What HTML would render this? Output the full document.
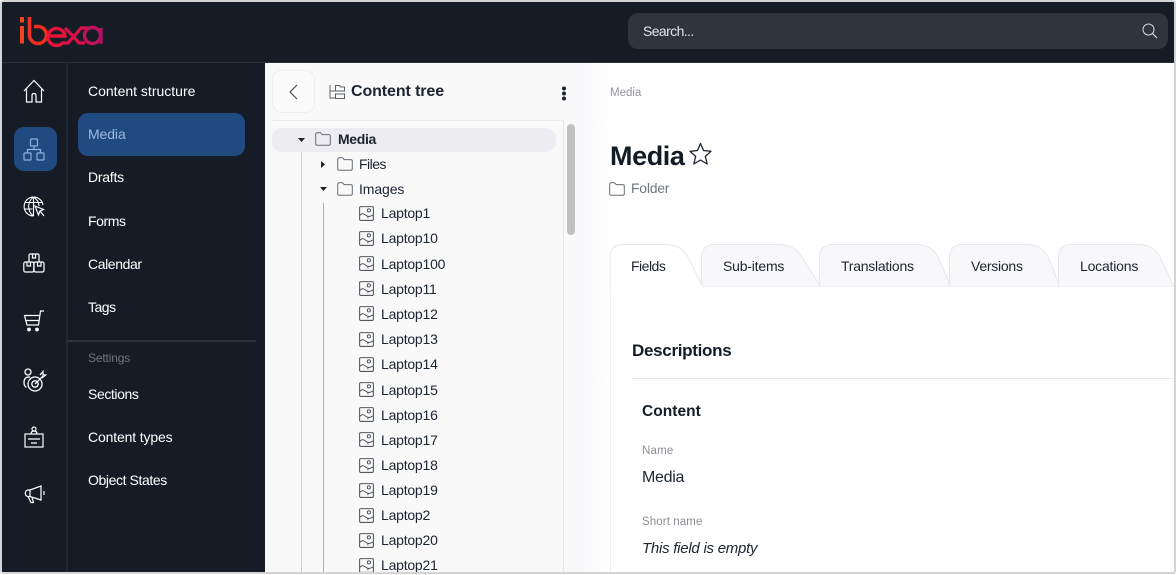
<!DOCTYPE html>
<html><head><meta charset="utf-8"><style>
*{box-sizing:border-box}
html,body{margin:0;padding:0}
body{width:1176px;height:574px;position:relative;overflow:hidden;background:#fff;font-family:"Liberation Sans",sans-serif}
.a{position:absolute;white-space:nowrap;line-height:20px}
.m{left:88px;color:#fff;font-size:14px}
.r{color:#1c2430;font-size:14px;letter-spacing:-.22px}
svg{position:absolute;overflow:visible;fill:none}
.tl{color:#1c2430;font-size:14px}
</style></head><body>
<svg width="0" height="0" style="position:absolute"><defs>
<symbol id="f" viewBox="0 0 16 14"><path d="M.7 2.2Q.7.7 2.2.7H5.6L7.2 2.6H13.8Q15.3 2.6 15.3 4.1V11.8Q15.3 13.3 13.8 13.3H2.2Q.7 13.3 .7 11.8Z" fill="none" stroke="#666c75" stroke-width="1"/></symbol>
<symbol id="i" viewBox="0 0 16 16"><rect x=".7" y=".7" width="14.6" height="14.6" rx="1" fill="none" stroke="#3a414b" stroke-width="1"/><circle cx="10.5" cy="4.7" r="1.7" fill="none" stroke="#3a414b" stroke-width=".9"/><path d="M1 10Q3.5 7 6 9T10 11Q12 11.500 15 9.500M9.500 11V13" fill="none" stroke="#3a414b" stroke-width=".9"/></symbol>
</defs></svg>

<!-- top bar -->
<div class="a" style="left:2px;top:2px;width:1172px;height:60px;background:#151c26"></div>
<div class="a" style="left:2px;top:62px;width:263px;height:510px;background:#151c26"></div>
<div class="a" style="left:2px;top:62px;width:1172px;height:1px;background:#2a313b"></div>
<div class="a" style="left:66px;top:62px;width:2px;height:510px;background:#1f2630"></div>
<svg style="left:18px;top:15px" width="86" height="30" viewBox="0 0 86 30">
<path d="M4 11V28.500M4 2V7.500" stroke="#f4411e" stroke-width="4"/>
<path d="M11.500 2V20A8.500 8.500 0 1 0 20 11.500H16" stroke="#f03020" stroke-width="3.600"/>
<path d="M32 21H47A8.500 8.500 0 1 0 45 27.500" stroke="#e8143a" stroke-width="3.400"/>
<path d="M47 13L55 21L61 28H67M44 28H50L58 19L63 13H70" stroke="#dc1048" stroke-width="3.200"/>
<circle cx="74.500" cy="20.500" r="8" stroke="#c0115a" stroke-width="3.400"/>
<path d="M83 13V29" stroke="#ae1164" stroke-width="3.400"/>
</svg>
<div class="a" style="left:628px;top:13px;width:540px;height:36px;background:#2e353f;border-radius:10px"></div>
<div class="a" style="left:643px;top:21px;color:#e3e5e8;font-size:14px;letter-spacing:-.6px">Search...</div>
<svg style="left:1142px;top:23px" width="16" height="16" viewBox="0 0 16 16"><circle cx="6.500" cy="6.500" r="5.500" stroke="#d5d8dc" stroke-width="1"/><path d="M10.500 10.500L15 15" stroke="#d5d8dc" stroke-width="1.200"/></svg>

<!-- rail -->
<div class="a" style="left:14px;top:127px;width:43px;height:44px;background:#214a80;border-radius:10px"></div>
<svg style="left:23px;top:79px" width="22" height="24" viewBox="0 0 22 24" stroke="#fff" stroke-width="1.200"><path d="M1 12L11 1.500L21 12M3.500 10V23H9V16.500Q9 14.500 11 14.500T13 16.500V23H18.500V10"/></svg>
<svg style="left:23px;top:138px" width="22" height="23" viewBox="0 0 22 23" stroke="#8fb1dd" stroke-width="1.200"><rect x="7.500" y="1" width="7" height="7" rx=".8"/><rect x="1" y="15" width="7" height="7" rx=".8"/><rect x="14" y="15" width="7" height="7" rx=".8"/><path d="M11 8V11.500M4.500 15V11.500H17.500V15"/></svg>
<svg style="left:23px;top:196px" width="22" height="22" viewBox="0 0 22 22" stroke="#fff" stroke-width="1.100"><path d="M20 9A9.500 9.500 0 1 0 10.500 20M10.500 .8V20M10.500 1C4 6 4 15 10.500 20M10.500 1C15 4 16 7 16 10M1.800 6.500H19M1 13H9.500"/><path d="M12 10L20.500 13.500L17 15L15.500 19ZM17 15L21 20" stroke-width="1.200"/></svg>
<svg style="left:23px;top:253px" width="22" height="20" viewBox="0 0 22 20" stroke="#fff" stroke-width="1.200"><path d="M6 9V2.500Q6 1 7.500 1H14.500Q16 1 16 2.500V9M9.500 1V5H12.500V1"/><rect x=".8" y="9" width="10" height="10" rx="1.500"/><rect x="11" y="9" width="10" height="10" rx="1.500"/><path d="M4 9V13H7.500V9M14.500 9V13H18V9"/></svg>
<svg style="left:23px;top:310px" width="22" height="22" viewBox="0 0 22 22" stroke="#fff" stroke-width="1.200"><path d="M21 1H17.500L15.500 15H4L1.500 5.500H16.500M3 10.500H16"/><circle cx="6" cy="19.500" r="1.300" fill="#fff"/><circle cx="14" cy="19.500" r="1.300" fill="#fff"/></svg>
<svg style="left:23px;top:368px" width="22" height="24" viewBox="0 0 22 24" stroke="#fff" stroke-width="1.300"><circle cx="5" cy="4" r="3"/><path d="M7 9Q1 8.500 1 14.500Q1 18 3.500 19.500"/><circle cx="12" cy="16" r="7"/><circle cx="12" cy="16" r="3.200"/><path d="M12 16L20 8M17 7L20 3.500V7H22.500L19 10"/></svg>
<svg style="left:24px;top:426px" width="20" height="23" viewBox="0 0 20 23" stroke="#fff" stroke-width="1.200"><rect x="1" y="8" width="18" height="13"/><circle cx="10" cy="3" r="2"/><path d="M7 8Q7 5 10 5T13 8M4 13H16M7 17H13"/></svg>
<svg style="left:23px;top:485px" width="22" height="18" viewBox="0 0 22 18" stroke="#fff" stroke-width="1.200"><path d="M18 1V15L7 11.500H4.500A3.500 3.500 0 0 1 4.500 5H7ZM7 5V11.500M5 11.500L8 17.500H10.500L9 12.500"/><path d="M21 6V10"/></svg>

<!-- menu -->
<div class="a" style="left:78px;top:113px;width:167px;height:43px;background:#214a80;border-radius:10px"></div>
<div class="a m" style="top:81px">Content structure</div>
<div class="a m" style="top:124px;color:#9bb9e2;letter-spacing:-.1px">Media</div>
<div class="a m" style="top:167px;letter-spacing:-.25px">Drafts</div>
<div class="a m" style="top:211px;letter-spacing:-.4px">Forms</div>
<div class="a m" style="top:254px;letter-spacing:-.4px">Calendar</div>
<div class="a m" style="top:297px;letter-spacing:-.5px">Tags</div>
<div class="a" style="left:67px;top:340px;width:189px;height:2px;background:#2a313b"></div>
<div class="a" style="left:88px;top:348px;color:#6f757d;font-size:12px;letter-spacing:-.15px">Settings</div>
<div class="a m" style="top:384px;letter-spacing:-.4px">Sections</div>
<div class="a m" style="top:427px;letter-spacing:-.15px">Content types</div>
<div class="a m" style="top:470px;letter-spacing:-.4px">Object States</div>

<!-- tree panel -->
<div class="a" style="left:265px;top:63px;width:315px;height:509px;background:#f9f9fa"></div>
<div class="a" style="left:272px;top:70px;width:43px;height:43px;background:#fbfbfc;border:1px solid #eeeef2;border-radius:10px"></div>
<svg style="left:288px;top:84px" width="11" height="16" viewBox="0 0 11 16" stroke="#3a414b" stroke-width="1.100"><path d="M9 1L2 8L9 15"/></svg>
<svg style="left:329px;top:84px" width="16" height="16" viewBox="0 0 16 16" stroke="#5a616b" stroke-width="1"><path d="M1 1V14H6M1 7H6"/><path d="M6.500 1.500H10.500L11.500 3H15.500V7H6.500ZM6.500 10H15.500V14.500H6.500Z"/></svg>
<div class="a" style="left:351px;top:82px;font-size:16px;font-weight:700;color:#1c2430;letter-spacing:-.1px">Content tree</div>
<svg style="left:561px;top:86px;fill:#1c2430" width="6" height="15" viewBox="0 0 6 15"><circle cx="3" cy="2.500" r="2"/><circle cx="3" cy="7.500" r="2"/><circle cx="3" cy="12.500" r="2"/></svg>
<div class="a" style="left:272px;top:120px;width:292px;height:1px;background:#ececf0"></div>
<div class="a" style="left:563px;top:121px;width:1px;height:451px;background:#e7e7ea"></div>
<div class="a" style="left:567px;top:124px;width:8px;height:111px;background:#c1c1c3;border-radius:4px"></div>
<div class="a" style="left:272px;top:128px;width:284px;height:24px;background:#ededf1;border-radius:10px"></div>
<div class="a" style="left:301px;top:152px;width:1px;height:420px;background:#cfcfd3"></div>
<div class="a" style="left:323px;top:203px;width:1px;height:369px;background:#b0b0b4"></div>
<svg style="left:298px;top:138px;fill:#222" width="7" height="4"><path d="M0 0H7L3.500 4Z"/></svg>
<svg style="left:321px;top:161px;fill:#222" width="4" height="7"><path d="M0 0V7L4 3.500Z"/></svg>
<svg style="left:320px;top:187px;fill:#222" width="7" height="4"><path d="M0 0H7L3.500 4Z"/></svg>
<svg style="left:315px;top:132px" width="16" height="14"><use href="#f"/></svg>
<svg style="left:337px;top:157px" width="16" height="14"><use href="#f"/></svg>
<svg style="left:337px;top:182px" width="16" height="14"><use href="#f"/></svg>
<div class="a r" style="left:338px;top:129px;font-weight:700;letter-spacing:-.35px">Media</div>
<div class="a r" style="left:359px;top:154px;letter-spacing:-.5px">Files</div>
<div class="a r" style="left:359px;top:179px;letter-spacing:-.1px">Images</div>

<svg style="left:359px;top:206px" width="15" height="15"><use href="#i"/></svg><div class="a r" style="left:381px;top:203px">Laptop1</div>
<svg style="left:359px;top:231px" width="15" height="15"><use href="#i"/></svg><div class="a r" style="left:381px;top:228px">Laptop10</div>
<svg style="left:359px;top:256px" width="15" height="15"><use href="#i"/></svg><div class="a r" style="left:381px;top:254px">Laptop100</div>
<svg style="left:359px;top:281px" width="15" height="15"><use href="#i"/></svg><div class="a r" style="left:381px;top:279px">Laptop11</div>
<svg style="left:359px;top:306px" width="15" height="15"><use href="#i"/></svg><div class="a r" style="left:381px;top:304px">Laptop12</div>
<svg style="left:359px;top:332px" width="15" height="15"><use href="#i"/></svg><div class="a r" style="left:381px;top:329px">Laptop13</div>
<svg style="left:359px;top:357px" width="15" height="15"><use href="#i"/></svg><div class="a r" style="left:381px;top:354px">Laptop14</div>
<svg style="left:359px;top:382px" width="15" height="15"><use href="#i"/></svg><div class="a r" style="left:381px;top:380px">Laptop15</div>
<svg style="left:359px;top:407px" width="15" height="15"><use href="#i"/></svg><div class="a r" style="left:381px;top:405px">Laptop16</div>
<svg style="left:359px;top:432px" width="15" height="15"><use href="#i"/></svg><div class="a r" style="left:381px;top:430px">Laptop17</div>
<svg style="left:359px;top:458px" width="15" height="15"><use href="#i"/></svg><div class="a r" style="left:381px;top:455px">Laptop18</div>
<svg style="left:359px;top:483px" width="15" height="15"><use href="#i"/></svg><div class="a r" style="left:381px;top:480px">Laptop19</div>
<svg style="left:359px;top:508px" width="15" height="15"><use href="#i"/></svg><div class="a r" style="left:381px;top:505px">Laptop2</div>
<svg style="left:359px;top:533px" width="15" height="15"><use href="#i"/></svg><div class="a r" style="left:381px;top:530px">Laptop20</div>
<svg style="left:359px;top:558px" width="15" height="15"><use href="#i"/></svg><div class="a r" style="left:381px;top:555px">Laptop21</div>

<!-- main -->
<div class="a" style="left:580px;top:63px;width:30px;height:509px;background:linear-gradient(90deg,#f8f9fd,#fff)"></div>
<div class="a" style="left:610px;top:82.500px;color:#93979d;font-size:11.500px">Media</div>
<div class="a" style="left:610px;top:141px;line-height:30px;font-size:27px;font-weight:700;color:#131c26;letter-spacing:-.4px">Media</div>
<svg style="left:689px;top:142px" width="23" height="24" viewBox="0 0 23 24" stroke="#1c2430" stroke-width="1.300" stroke-linejoin="round"><path d="M11.500 1.500L14.500 8.500L22 9.300L16.300 14.400L18.200 22L11.500 18L4.800 22L6.700 14.400L1 9.300L8.500 8.500Z"/></svg>
<svg style="left:609px;top:182px" width="16" height="14"><use href="#f"/></svg>
<div class="a" style="left:631px;top:178px;color:#71767d;font-size:14px;letter-spacing:-.25px">Folder</div>

<!-- tabs -->
<svg style="left:600px;top:240px" width="576" height="50" viewBox="600 240 576 50" stroke="#e7e7ef" stroke-width="1">
<path fill="#f8f8fa" d="M701.500 287V258Q701.500 244.500 715 244.500H778Q796 244.500 803 259L821 287Z"/>
<path fill="#f8f8fa" d="M819.500 287V258Q819.500 244.500 833 244.500H916Q933 244.500 939 259L951 287Z"/>
<path fill="#f8f8fa" d="M949.500 287V258Q949.500 244.500 963 244.500H1027Q1043 244.500 1049 259L1060 287Z"/>
<path fill="#f8f8fa" d="M1058.500 287V258Q1058.500 244.500 1072 244.500H1138Q1155 244.500 1161 259L1174 287Z"/>
<path fill="#fff" d="M610 290V258Q610 244.500 623.500 244.500H665Q682 244.500 689 259L703 287V290"/>
</svg>
<div class="a" style="left:610px;top:287px;width:564px;height:285px;border-left:1px solid #eeeef3;background:#fff"></div>
<div class="a tl" style="left:631px;top:256px;letter-spacing:-.5px">Fields</div>
<div class="a tl" style="left:723px;top:256px;letter-spacing:-.2px">Sub-items</div>
<div class="a tl" style="left:841px;top:256px;letter-spacing:-.25px">Translations</div>
<div class="a tl" style="left:971px;top:256px;letter-spacing:-.25px">Versions</div>
<div class="a tl" style="left:1080px;top:256px;letter-spacing:-.2px">Locations</div>

<div class="a" style="left:632px;top:341px;font-size:17px;font-weight:700;color:#131c26;letter-spacing:-.3px">Descriptions</div>
<div class="a" style="left:632px;top:378px;width:542px;height:1px;background:#e8e8ec"></div>
<div class="a" style="left:642px;top:402px;font-size:15.500px;font-weight:700;color:#131c26;letter-spacing:.05px">Content</div>
<div class="a" style="left:642px;top:441px;font-size:11.500px;color:#8a8e94;letter-spacing:.2px">Name</div>
<div class="a" style="left:642px;top:468px;font-size:16px;color:#1c2430;letter-spacing:-.3px">Media</div>
<div class="a" style="left:642px;top:512px;font-size:11.500px;color:#8a8e94;letter-spacing:.1px">Short name</div>
<div class="a" style="left:642px;top:539px;font-size:15px;font-style:italic;color:#1c2430;letter-spacing:-.25px">This field is empty</div>

<!-- screenshot frame -->
<div class="a" style="left:0;top:0;width:1176px;height:574px;border:2px solid #d4d4d4;border-radius:3px;background:transparent"></div>
</body></html>
